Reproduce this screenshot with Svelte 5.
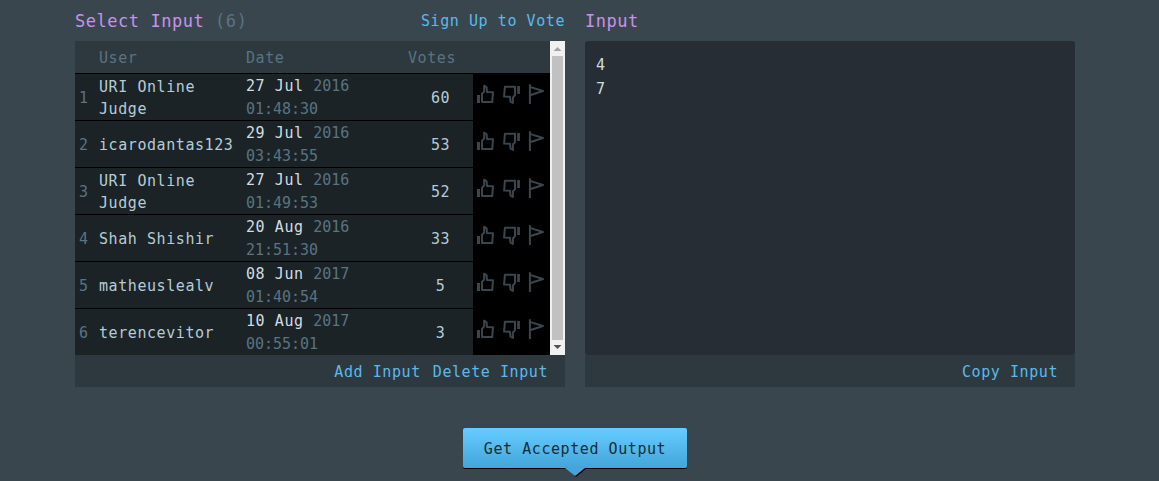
<script>
  const entries = [
    { user: 'URI Online Judge', day: '27 Jul', year: '2016', time: '01:48:30', votes: 60 },
    { user: 'icarodantas123', day: '29 Jul', year: '2016', time: '03:43:55', votes: 53 },
    { user: 'URI Online Judge', day: '27 Jul', year: '2016', time: '01:49:53', votes: 52 },
    { user: 'Shah Shishir', day: '20 Aug', year: '2016', time: '21:51:30', votes: 33 },
    { user: 'matheuslealv', day: '08 Jun', year: '2017', time: '01:40:54', votes: 5 },
    { user: 'terencevitor', day: '10 Aug', year: '2017', time: '00:55:01', votes: 3 }
  ];
</script>

<main>
  <div class="columns">
    <section>
      <header>
        <h2>Select Input <span>(6)</span></h2>
        <a href="#vote">Sign Up to Vote</a>
      </header>
      <div class="list">
        <div class="table">
          <div class="row head">
            <span></span><span>User</span><span>Date</span><span>Votes</span>
          </div>
          {#each entries as entry, i}
            <div class="row">
              <span class="index">{i + 1}</span>
              <span class="user">{entry.user}</span>
              <span class="date">{entry.day} <i>{entry.year}</i><br /><i>{entry.time}</i></span>
              <span class="votes">{entry.votes}</span>
              <span class="actions">
                <svg width="70" height="22" viewBox="0 0 70 22">
                  <path class="solid" d="M0 11h3v8H0zM40.2 2h2.7v8h-2.7z" />
                  <path d="M5 18.1V9.9L7.2 7.4L7.1 1.7L9.6 3.4L10 8L16 8.2L15.2 18.1ZM38 2.8V11.1L35.9 13.5V18.9L33.5 17.7L33 12.8L27.1 12.6L27.9 2.8Z" />
                  <path d="M52.9 .2V20M52.9 2.9L66 7L52.9 11.2" />
                </svg>
              </span>
            </div>
          {/each}
        </div>
        <div class="scrollbar">
          <svg width="15" height="15"><path fill="#a3a3a3" d="M3.5 10h8L7.5 6z" /></svg>
          <div class="thumb"></div>
          <svg width="15" height="15"><path fill="#505050" d="M3.5 5h8L7.5 9z" /></svg>
        </div>
      </div>
      <footer><a href="#add">Add Input</a><a href="#delete">Delete Input</a></footer>
    </section>
    <section>
      <header><h2>Input</h2></header>
      <pre>4
7</pre>
      <footer><a href="#copy">Copy Input</a></footer>
    </section>
  </div>
  <button>
    Get Accepted Output
    <svg class="pointer" width="24" height="10" viewBox="0 0 24 10">
      <path fill="#000" d="M3 0H23L13 8.5H11z" />
      <path fill="#43a5d9" d="M1 0H21L11 8z" />
    </svg>
  </button>
</main>

<style>
  :global(body) { margin: 0; background: #3a464e; }
  main {
    box-sizing: border-box;
    height: 481px;
    padding-left: 75px;
    overflow: hidden;
    color: #b5ccd6;
    font: 15px/24px "DejaVu Sans Mono", monospace;
    letter-spacing: .57px;
  }
  .columns { display: flex; gap: 20px; }
  section { width: 490px; }
  header { display: flex; height: 41px; align-items: center; justify-content: space-between; }
  h2 { margin: 0; padding-top: 1px; font-size: 17px; font-weight: 400; letter-spacing: .54px; color: #c792ea; }
  h2 span, .head, .index, i { color: #587482; font-style: normal; }
  i { letter-spacing: -.03px; }
  a { color: #5ab9ec; text-decoration: none; }
  header a { padding-top: 1px; }
  .list { display: flex; height: 314px; overflow: hidden; }
  .table { width: 475px; background: #000; }
  .row {
    display: grid;
    grid-template-columns: 24px 147px 162px 65px 77px;
    grid-template-rows: 100%;
    height: 46px;
    align-items: center;
    margin-bottom: 1px;
    background: linear-gradient(90deg, #1c2327 398px, #000 398px);
  }
  .head { height: 32px; background: #2e393f; }
  .head span { padding-top: 2px; }
  .index { padding-left: 4px; }
  .user { line-height: 22px; padding: 1px 10px 0 0; }
  .date { line-height: 23px; padding-top: 2px; color: #cfdde3; }
  .votes { text-align: center; }
  .index, .votes { padding-top: 2px; }
  .actions { padding-left: 4px; height: 22px; margin-top: -4px; }
  .actions svg { display: block; }
  .actions path { fill: none; stroke: #3a464e; stroke-width: 2; stroke-linejoin: round; }
  .actions .solid { fill: #3a464e; stroke: none; }
  .scrollbar { display: flex; flex-direction: column; align-items: center; width: 15px; background: #f1f1f1; }
  .scrollbar svg { display: block; }
  .thumb { flex: 1; width: 11px; background: #c1c1c1; }
  footer {
    box-sizing: border-box;
    display: flex;
    justify-content: flex-end;
    align-items: center;
    gap: 12px;
    height: 32px;
    padding: 1px 17px 0 0;
    background: #2e393f;
  }
  pre {
    box-sizing: border-box;
    height: 314px;
    margin: 0;
    padding: 12px 11px;
    border-radius: 3px;
    background: #262d34;
    color: #cfdde3;
    font: inherit;
  }
  button {
    position: relative;
    display: block;
    width: 224px;
    height: 40px;
    margin: 41px 0 0 388px;
    padding: 1px 0 0;
    border: 0;
    border-radius: 2px;
    background: linear-gradient(#66ccff, #43a5d9);
    box-shadow: 0 1px #000;
    color: #162e3b;
    font: inherit;
    letter-spacing: inherit;
  }
  .pointer { position: absolute; left: 101px; top: 40px; }
</style>
